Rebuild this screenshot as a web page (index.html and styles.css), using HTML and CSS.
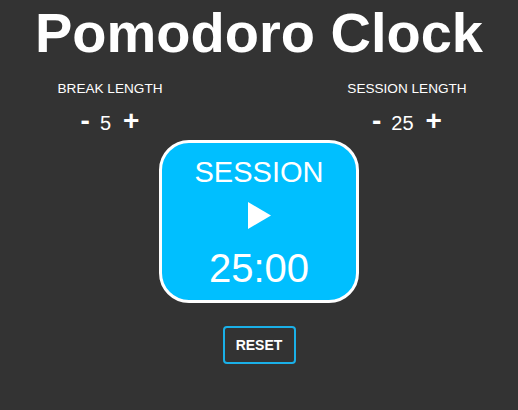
FILE: index.html
```html
<!DOCTYPE html>
<html>
<head>
<meta charset="utf-8">
<link rel="stylesheet" href="styles.css">
</head>
<body>
<h1 class="title">Pomodoro Clock</h1>
<div class="lengths">
  <div class="length">
    <div class="label">BREAK LENGTH</div>
    <div class="controls">
      <span class="btn">-</span>
      <span class="value">5</span>
      <span class="btn">+</span>
    </div>
  </div>
  <div class="length">
    <div class="label">SESSION LENGTH</div>
    <div class="controls">
      <span class="btn">-</span>
      <span class="value">25</span>
      <span class="btn">+</span>
    </div>
  </div>
</div>
<div class="timer">
  <div class="mode">SESSION</div>
  <svg class="play" width="23" height="27" viewBox="0 0 23 27"><polygon points="0,0 23,13.5 0,27" fill="#fff"/></svg>
  <div class="time">25:00</div>
</div>
<button class="reset">RESET</button>
</body>
</html>
```
FILE: styles.css
```css
html, body {
  margin: 0;
  padding: 0;
}
body {
  background: #333333;
  color: #ffffff;
  font-family: "Liberation Sans", Arial, sans-serif;
  height: 410px;
  display: flex;
  flex-direction: column;
}
.title {
  margin: 0;
  font-size: 56px;
  line-height: 66px;
  font-weight: bold;
  text-align: center;
}
.lengths {
  display: flex;
  justify-content: space-between;
  padding: 0 31px 0 30px;
  margin-top: 15px;
}
.length {
  width: 160px;
  display: flex;
  flex-direction: column;
  align-items: center;
}
.label {
  font-size: 13.6px;
  line-height: 15px;
}
.controls {
  display: flex;
  align-items: baseline;
  gap: 10px;
  margin-top: 11px;
}
.controls .value + .btn {
  margin-left: 2px;
}
.btn {
  font-size: 28px;
  font-weight: bold;
  line-height: 28px;
}
.value {
  font-size: 20px;
  line-height: 28px;
}
.timer {
  box-sizing: border-box;
  width: 200px;
  height: 163px;
  margin: 3px auto 0;
  border: 3px solid #ffffff;
  border-radius: 30px;
  background: #00bfff;
  display: flex;
  flex-direction: column;
  align-items: center;
  padding-top: 15px;
}
.mode {
  font-size: 29px;
  line-height: 28px;
}
.play {
  display: block;
  margin-top: 16px;
}
.time {
  font-size: 40px;
  line-height: 40px;
  margin-top: 19px;
}
.reset {
  box-sizing: border-box;
  width: 73px;
  height: 38px;
  margin: 23px auto 0;
  border: 2px solid #1ab0e8;
  border-radius: 4px;
  background: transparent;
  color: #ffffff;
  font-family: "Liberation Sans", Arial, sans-serif;
  font-size: 14px;
  font-weight: bold;
  padding: 0;
}
```
